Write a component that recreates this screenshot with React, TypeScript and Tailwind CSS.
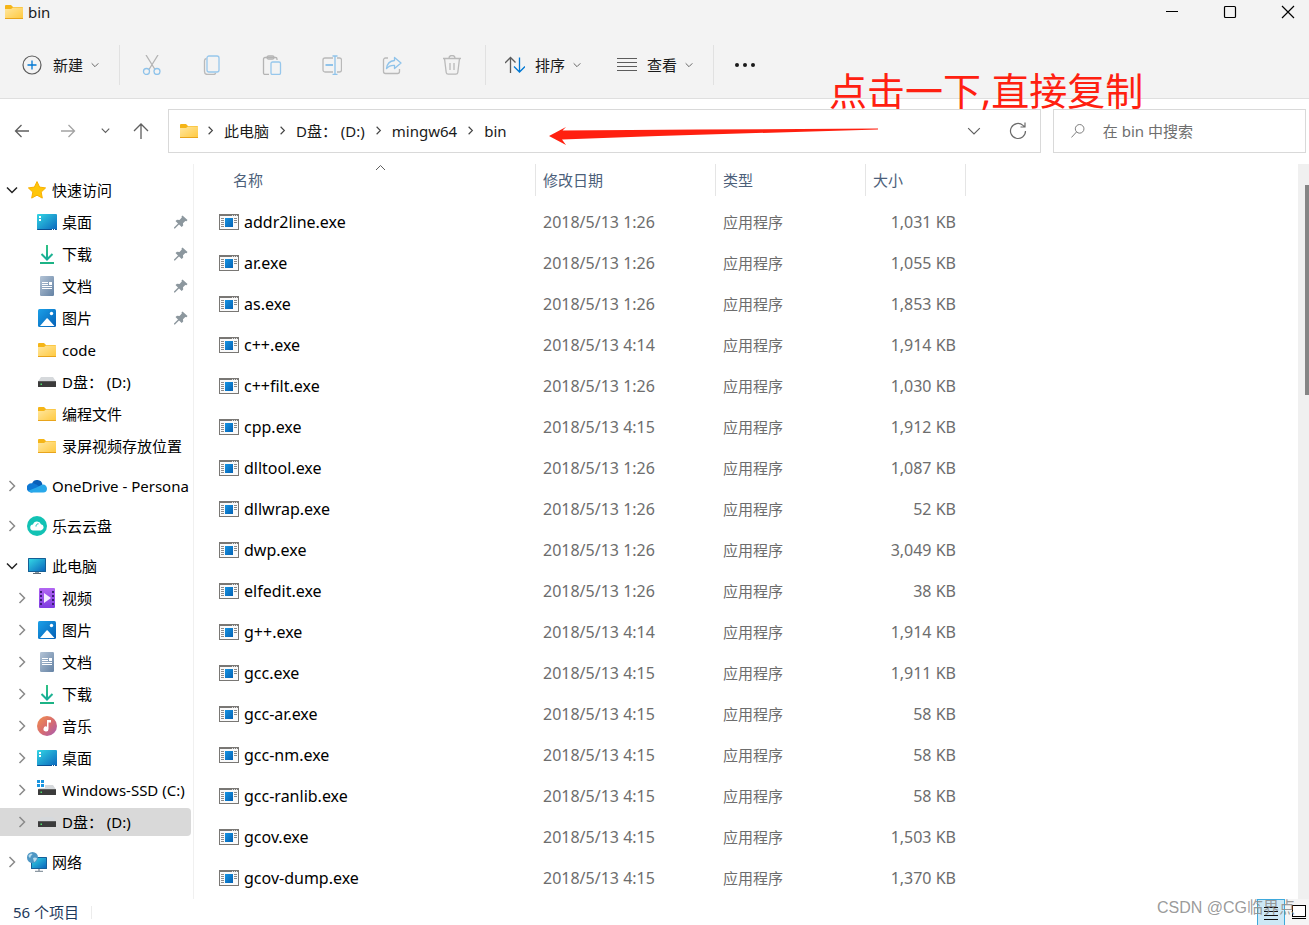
import type { ReactNode } from "react";

type IconProps = { className?: string };

const FolderIcon = ({ className = "" }: IconProps) => (
  <svg className={`w-5 h-5 shrink-0 ${className}`} viewBox="0 0 20 20">
    <defs>
      <linearGradient id="folder" x1="0" y1="0" x2="1" y2="1">
        <stop offset="0" stopColor="#ffe7a0" />
        <stop offset="1" stopColor="#ffc83d" />
      </linearGradient>
    </defs>
    <path d="M1 4a1 1 0 0 1 1-1h5l2 2h9a1 1 0 0 1 1 1v4H1z" fill="#f5b517" />
    <path d="M1 7h6l2-1.4h10V16a1 1 0 0 1-1 1H2a1 1 0 0 1-1-1z" fill="url(#folder)" />
    <path d="M1 16.5h18" stroke="#e8a41c" strokeWidth="1" />
  </svg>
);

const StarIcon = () => (
  <svg className="w-5 h-5 shrink-0" viewBox="0 0 20 20">
    <path
      d="M10 1.6l2.6 5.5 6 .8-4.4 4.2 1.1 6L10 15.2l-5.3 2.9 1.1-6L1.4 7.9l6-.8z"
      fill="#ffc60a"
      stroke="#f9b000"
      strokeWidth="1"
      strokeLinejoin="round"
    />
  </svg>
);

const DesktopIcon = () => (
  <svg className="w-5 h-5 shrink-0" viewBox="0 0 20 20">
    <defs>
      <linearGradient id="desktop" x1="0" y1="0" x2="1" y2="1">
        <stop offset="0" stopColor="#33d6e4" />
        <stop offset="1" stopColor="#0a66bd" />
      </linearGradient>
    </defs>
    <rect x="0" y="2" width="20" height="16" rx="1" fill="url(#desktop)" />
    <path d="M0 17h20v0a1 1 0 0 1-1 1H1a1 1 0 0 1-1-1z" fill="#0b4f93" />
    <path d="M2 4h2v2H2zM2 7h2v2H2z" fill="#fff" />
    <path d="M15 17.5h1M17 17.5h1" stroke="#fff" strokeWidth="1" />
  </svg>
);

const DownloadIcon = () => (
  <svg className="w-5 h-5 shrink-0" viewBox="0 0 20 20" fill="none" strokeWidth="2">
    <defs>
      <linearGradient id="download" gradientUnits="userSpaceOnUse" x1="0" y1="0" x2="0" y2="20">
        <stop offset="0" stopColor="#33c481" />
        <stop offset="1" stopColor="#0da5a0" />
      </linearGradient>
    </defs>
    <path d="M10 1v14M4.5 10l5.5 5.5L15.5 10" stroke="url(#download)" />
    <path d="M3 19h14" stroke="#1cb385" />
  </svg>
);

const DocumentIcon = () => (
  <svg className="w-5 h-5 shrink-0" viewBox="0 0 20 20">
    <defs>
      <linearGradient id="doc" x1="0" y1="0" x2="1" y2="1">
        <stop offset="0" stopColor="#b4c4d6" />
        <stop offset="1" stopColor="#6482a4" />
      </linearGradient>
    </defs>
    <rect x="3" y="0" width="14" height="20" rx="1.2" fill="url(#doc)" />
    <path d="M5 6.5h6M5 8.5h6M5 10.5h10M5 12.5h10" stroke="#fff" strokeWidth="1" />
    <rect x="12" y="6" width="3" height="3" fill="#fff" />
  </svg>
);

const PictureIcon = () => (
  <svg className="w-5 h-5 shrink-0" viewBox="0 0 20 20">
    <defs>
      <linearGradient id="pic" x1="0" y1="0" x2="1" y2="1">
        <stop offset="0" stopColor="#1ba0e8" />
        <stop offset="1" stopColor="#0560b6" />
      </linearGradient>
    </defs>
    <rect x="1" y="1" width="18" height="18" rx="1.5" fill="url(#pic)" />
    <path d="M3 18l6.5-7.5a.8.8 0 0 1 1.2 0L17.5 18z" fill="#fff" />
    <circle cx="14.5" cy="5.5" r="1.7" fill="#fff" />
  </svg>
);

const DriveIcon = ({ windows = false }: { windows?: boolean }) => (
  <svg className="w-5 h-5 shrink-0" viewBox="0 0 20 20">
    <path d="M4 5h12l3 4.5H1z" fill="#d6d9dc" />
    <rect x="1" y="9" width="18" height="6" rx=".6" fill="#3b3b3b" />
    <path d="M1 9.5h18" stroke="#5c5c5c" />
    <rect x="3.5" y="11.5" width="1.5" height="1.5" fill="#4de06c" />
    {windows && (
      <>
        <path d="M0 0h8v8H0z" fill="#fff" />
        <path d="M0 0h3v3H0zM4 0h3v3H4zM0 4h3v3H0zM4 4h3v3H4z" fill="#1a95e0" />
      </>
    )}
  </svg>
);

const OneDriveIcon = () => (
  <svg className="w-5 h-5 shrink-0" viewBox="0 0 20 20">
    <path d="M5 7.5a5.5 5.5 0 0 1 10.5 1L10 13z" fill="#0a5fb8" />
    <path d="M4.500 7.300C6.500 6.800 8 7.600 9.500 8.600L14 12l-9 4.500h-.8A4.300 4.300 0 0 1 4.500 7.300z" fill="#0f78d4" />
    <path d="M9.500 11.500l4.500-2.300c3-1.700 6 .6 6 3.600a3.700 3.700 0 0 1-3.700 3.700H4.500c-1.500 0-2.600-.8-3.200-1.700z" fill="#28a8ea" />
  </svg>
);

const CloudDiskIcon = () => (
  <svg className="w-5 h-5 shrink-0" viewBox="0 0 20 20">
    <circle cx="10" cy="10" r="10" fill="#12c2b4" />
    <path d="M6.500 14.500a3 3 0 0 1-.5-6 4.200 4.200 0 0 1 8-.3 3.200 3.200 0 0 1 0 6.300z" fill="#fff" />
    <path d="M9 10.500c0-1.800 1-2.700 2.500-2.700" fill="none" stroke="#12c2b4" strokeWidth="1" />
  </svg>
);

const ComputerIcon = () => (
  <svg className="w-5 h-5 shrink-0" viewBox="0 0 20 20">
    <rect x="1" y="2" width="18" height="14" rx=".5" fill="#145f95" />
    <rect x="2" y="3" width="16" height="12" fill="url(#desktop)" />
    <path d="M8 16h4v1.500H8z" fill="#8b98a3" />
    <path d="M6 17.500h8" stroke="#5e6a74" />
  </svg>
);

const VideoIcon = () => (
  <svg className="w-5 h-5 shrink-0" viewBox="0 0 20 20">
    <defs>
      <linearGradient id="video" x1="0" y1="0" x2="0" y2="1">
        <stop offset="0" stopColor="#b266f2" />
        <stop offset="1" stopColor="#7e3be0" />
      </linearGradient>
    </defs>
    <rect x="2" y="0" width="16" height="20" rx="1" fill="url(#video)" />
    <path d="M4 3v15M16 3v15" stroke="#3c1d75" strokeWidth="2" strokeDasharray="2 2" />
    <path d="M7 5l7 5-7 5z" fill="#f4ecff" />
  </svg>
);

const MusicIcon = () => (
  <svg className="w-5 h-5 shrink-0" viewBox="0 0 20 20">
    <defs>
      <linearGradient id="music" x1="0" y1="0" x2="1" y2="1">
        <stop offset="0" stopColor="#f2914f" />
        <stop offset=".5" stopColor="#d96d6c" />
        <stop offset="1" stopColor="#a55ab5" />
      </linearGradient>
    </defs>
    <circle cx="10" cy="10" r="10" fill="url(#music)" />
    <path d="M10 4h4v2.500h-2.500V13a2.500 2.500 0 1 1-1.500-2.300z" fill="#fff" />
  </svg>
);

const NetworkIcon = () => (
  <svg className="w-5 h-5 shrink-0" viewBox="0 0 20 20">
    <rect x="4" y="5" width="16" height="12" rx=".5" fill="#155f9a" />
    <rect x="5" y="6" width="14" height="10" fill="url(#desktop)" />
    <path d="M12 17v2M8 19.500h8" stroke="#8d99a3" strokeWidth="1.500" />
    <circle cx="5.500" cy="5.500" r="5.500" fill="#4e97c4" />
    <path d="M1.500 3.500c1-1.500 2.500-2 4-1.500-.5 1.500-2 1.500-2 3.500-1 .5-2-.5-2-2zM6 6c1.500-1 3-.5 4 0-.5 2-1.500 3.500-3 4z" fill="#b9dcee" />
  </svg>
);

const PinIcon = () => (
  <svg className="w-[14px] h-[14px] shrink-0" viewBox="0 0 14 14">
    <path d="M8.500.5l5 4.500-1 1.200-1.200-.2-2.300 2.200.2 2.300-1.500 1.500L5 9.500 1 13.500H0v-1L4 8.500 1.500 6 3 4.700l2.500.2L7.800 2.500 7.500 1.500z" fill="#8c979e" />
  </svg>
);

const ExeIcon = () => (
  <svg className="w-5 h-4 shrink-0" viewBox="0 0 20 16">
    <defs>
      <linearGradient id="exe" x1="0" y1="0" x2="1" y2="1">
        <stop offset="0" stopColor="#1593e2" />
        <stop offset="1" stopColor="#0562b4" />
      </linearGradient>
    </defs>
    <rect x=".5" y=".5" width="19" height="15" fill="#fafafa" stroke="#797774" />
    <path d="M0 1h20" stroke="#797774" strokeWidth="2" />
    <path d="M13 1.500h1M15 1.500h1M17 1.500h1" stroke="#ddd" />
    <rect x="6" y="4" width="8" height="9" fill="url(#exe)" />
    <path d="M2 4.500h3M2 6.500h3M2 8.500h3M2 10.500h3M2 12.500h3M15 4.500h3M15 6.500h3M15 8.500h3" stroke="#8a8a8a" />
  </svg>
);

const Chevron = ({ dir, className = "" }: { dir: "down" | "right"; className?: string }) => (
  <svg className={`shrink-0 ${className}`} viewBox="0 0 12 12" fill="none" stroke="currentColor">
    <path d={dir === "down" ? "M1 3.500l5 5 5-5" : "M3.500 1l5 5-5 5"} />
  </svg>
);

const tools: { label: string; icon: ReactNode }[] = [
  {
    label: "剪切",
    icon: (
      <>
        <path d="M4 0l9 14.500M16 0L7 14.500" stroke="#b4b4b4" />
        <circle cx="4.500" cy="16.500" r="3" stroke="#8fc3ea" />
        <circle cx="15" cy="16.500" r="3" stroke="#8fc3ea" />
      </>
    ),
  },
  {
    label: "复制",
    icon: (
      <>
        <path d="M4.500 3.500c-1.500.3-2 1-2 2v11a3 3 0 0 0 3 3h6c1 0 1.800-.5 2.200-1.500" stroke="#b9b9b9" />
        <rect x="5" y="1" width="12" height="16" rx="2" stroke="#97c7ec" />
      </>
    ),
  },
  {
    label: "粘贴",
    icon: (
      <>
        <path d="M7 19.500H3a1.500 1.500 0 0 1-1.500-1.500V4A1.500 1.500 0 0 1 3 2.500h10.500A1.500 1.500 0 0 1 15 4v1" stroke="#b4b4b4" />
        <rect x="5" y="1" width="7" height="3" rx="1.500" stroke="#b4b4b4" />
        <rect x="9" y="7" width="9.500" height="12.500" rx="1.500" stroke="#97c7ec" />
      </>
    ),
  },
  {
    label: "重命名",
    icon: (
      <>
        <path d="M11 17H3a2 2 0 0 1-2-2V5a2 2 0 0 1 2-2h8M15 3h2.500a2 2 0 0 1 2 2v10a2 2 0 0 1-2 2H15" stroke="#b9b9b9" />
        <path d="M13 1v18M10.500 1h5M10.500 19.500h5" stroke="#8fc3ea" />
        <path d="M3.500 10h7.500" stroke="#8fc3ea" strokeWidth="2" />
      </>
    ),
  },
  {
    label: "共享",
    icon: (
      <>
        <path d="M6 3H3.500a2 2 0 0 0-2 2v11.500a2 2 0 0 0 2 2h12a2 2 0 0 0 2-2V14" stroke="#b9b9b9" />
        <path d="M12.500 2.500l6.500 5.500-6.500 5.500v-3.200c-3.500-.2-6 .8-8 3.200.5-4.500 3.500-7.500 8-8z" stroke="#8fc3ea" strokeLinejoin="round" />
      </>
    ),
  },
  {
    label: "删除",
    icon: (
      <path
        d="M1 3.500h18M7 3a3 2.500 0 0 1 6 0M2.500 3.500l1.700 14a2 2 0 0 0 2 1.700h7.600a2 2 0 0 0 2-1.700l1.700-14M8 8v7M12 8v7"
        stroke="#b9b9b9"
      />
    ),
  },
];

type NavItem = {
  label: string;
  icon: ReactNode;
  expander?: "down" | "right";
  child?: boolean;
  pinned?: boolean;
  selected?: boolean;
};

const navGroups: NavItem[][] = [
  [
    { label: "快速访问", icon: <StarIcon />, expander: "down" },
    { label: "桌面", icon: <DesktopIcon />, child: true, pinned: true },
    { label: "下载", icon: <DownloadIcon />, child: true, pinned: true },
    { label: "文档", icon: <DocumentIcon />, child: true, pinned: true },
    { label: "图片", icon: <PictureIcon />, child: true, pinned: true },
    { label: "code", icon: <FolderIcon />, child: true },
    { label: "D盘： (D:)", icon: <DriveIcon />, child: true },
    { label: "编程文件", icon: <FolderIcon />, child: true },
    { label: "录屏视频存放位置", icon: <FolderIcon />, child: true },
  ],
  [{ label: "OneDrive - Persona", icon: <OneDriveIcon />, expander: "right" }],
  [{ label: "乐云云盘", icon: <CloudDiskIcon />, expander: "right" }],
  [
    { label: "此电脑", icon: <ComputerIcon />, expander: "down" },
    { label: "视频", icon: <VideoIcon />, expander: "right", child: true },
    { label: "图片", icon: <PictureIcon />, expander: "right", child: true },
    { label: "文档", icon: <DocumentIcon />, expander: "right", child: true },
    { label: "下载", icon: <DownloadIcon />, expander: "right", child: true },
    { label: "音乐", icon: <MusicIcon />, expander: "right", child: true },
    { label: "桌面", icon: <DesktopIcon />, expander: "right", child: true },
    { label: "Windows-SSD (C:)", icon: <DriveIcon windows />, expander: "right", child: true },
    { label: "D盘： (D:)", icon: <DriveIcon />, expander: "right", child: true, selected: true },
  ],
  [{ label: "网络", icon: <NetworkIcon />, expander: "right" }],
];

const files = [
  ["addr2line.exe", "2018/5/13 1:26", "1,031 KB"],
  ["ar.exe", "2018/5/13 1:26", "1,055 KB"],
  ["as.exe", "2018/5/13 1:26", "1,853 KB"],
  ["c++.exe", "2018/5/13 4:14", "1,914 KB"],
  ["c++filt.exe", "2018/5/13 1:26", "1,030 KB"],
  ["cpp.exe", "2018/5/13 4:15", "1,912 KB"],
  ["dlltool.exe", "2018/5/13 1:26", "1,087 KB"],
  ["dllwrap.exe", "2018/5/13 1:26", "52 KB"],
  ["dwp.exe", "2018/5/13 1:26", "3,049 KB"],
  ["elfedit.exe", "2018/5/13 1:26", "38 KB"],
  ["g++.exe", "2018/5/13 4:14", "1,914 KB"],
  ["gcc.exe", "2018/5/13 4:15", "1,911 KB"],
  ["gcc-ar.exe", "2018/5/13 4:15", "58 KB"],
  ["gcc-nm.exe", "2018/5/13 4:15", "58 KB"],
  ["gcc-ranlib.exe", "2018/5/13 4:15", "58 KB"],
  ["gcov.exe", "2018/5/13 4:15", "1,503 KB"],
  ["gcov-dump.exe", "2018/5/13 4:15", "1,370 KB"],
];

const Separator = ({ className = "" }: IconProps) => (
  <div className={`w-px h-10 bg-[#e1e1e1] shrink-0 ${className}`} />
);

const TitleBar = () => (
  <div className="flex items-center justify-between h-6 pl-1 pr-[14px]">
    <div className="flex items-center gap-1">
      <FolderIcon />
      <span>bin</span>
    </div>
    <div className="flex items-center gap-[44px]">
      <button aria-label="最小化" className="w-[14px] h-[14px]">
        <svg viewBox="0 0 14 14" stroke="#000"><path d="M1 6.500h12" /></svg>
      </button>
      <button aria-label="最大化" className="w-[14px] h-[14px]">
        <svg viewBox="0 0 14 14" fill="none" stroke="#000"><rect x="1.500" y="1.500" width="11" height="11" rx="1" strokeWidth="1.200" /></svg>
      </button>
      <button aria-label="关闭" className="w-[14px] h-[14px]">
        <svg viewBox="0 0 14 14" stroke="#000" strokeWidth="1.200"><path d="M1 1l12 12M13 1L1 13" /></svg>
      </button>
    </div>
  </div>
);

const Toolbar = () => (
  <div className="flex items-center grow pl-[22px] pt-2">
    <button className="flex items-center gap-2">
      <svg className="w-5 h-5" viewBox="0 0 20 20" fill="none">
        <circle cx="10" cy="10" r="9" stroke="#5c5c5c" strokeWidth="1.200" />
        <path d="M10 5.500v9M5.500 10h9" stroke="#0078d4" strokeWidth="1.300" />
      </svg>
      <span className="pl-[3px]">新建</span>
      <Chevron dir="down" className="w-2 h-2 stroke-[1.5] text-[#666]" />
    </button>
    <Separator className="ml-5" />
    <div className="flex ml-[2px] mr-[3px]">
      {tools.map((t) => (
        <button key={t.label} aria-label={t.label} disabled className="flex justify-center w-[60px]">
          <svg className="w-5 h-5" viewBox="0 0 20 20" fill="none" strokeWidth="1.300">{t.icon}</svg>
        </button>
      ))}
    </div>
    <Separator />
    <button className="flex items-center gap-2 ml-[19px]">
      <svg className="w-5 h-5" viewBox="0 0 20 20" fill="none" strokeWidth="1.300">
        <path d="M5.500 18V2.500M0 8l5.500-5.500 5 5" stroke="#5c5c5c" />
        <path d="M14.500 2.500V17M9 11.500l5.500 5.500 5.500-5.500" stroke="#0078d4" />
      </svg>
      <span className="pl-[2px]">排序</span>
      <Chevron dir="down" className="w-2 h-2 stroke-[1.5] text-[#666]" />
    </button>
    <button className="flex items-center gap-2 ml-9">
      <svg className="w-5 h-5" viewBox="0 0 20 20" stroke="#5c5c5c">
        <path d="M0 3.500h20M0 7.500h20M0 11.500h20M0 15.500h20" />
      </svg>
      <span className="pl-[2px]">查看</span>
      <Chevron dir="down" className="w-2 h-2 stroke-[1.5] text-[#666]" />
    </button>
    <Separator className="ml-5" />
    <button aria-label="更多" className="ml-5">
      <svg className="w-[22px] h-5" viewBox="0 0 22 20" fill="#1a1a1a">
        <circle cx="3" cy="10" r="2" />
        <circle cx="11" cy="10" r="2" />
        <circle cx="19" cy="10" r="2" />
      </svg>
    </button>
  </div>
);

const crumbs = ["此电脑", "D盘： (D:)", "mingw64", "bin"];

const AddressRow = () => (
  <div className="relative flex items-center h-[65px] pr-[3px] pb-[2px]">
    <div className="flex items-center w-[168px] pl-[14px] text-[#5f5f5f] shrink-0">
      <button aria-label="后退" className="w-4 h-4">
        <svg viewBox="0 0 16 16" fill="none" stroke="currentColor" strokeWidth="1.300"><path d="M15 8H1.500M7.500 2l-6 6 6 6" /></svg>
      </button>
      <button aria-label="前进" className="w-4 h-4 ml-[30px] text-[#a3a3a3]">
        <svg viewBox="0 0 16 16" fill="none" stroke="currentColor" strokeWidth="1.300"><path d="M1 8h13.500M8.500 2l6 6-6 6" /></svg>
      </button>
      <button aria-label="最近浏览的位置" className="ml-[25px]">
        <Chevron dir="down" className="w-[9px] h-[9px] stroke-[1.5]" />
      </button>
      <button aria-label="向上" className="w-4 h-4 ml-[23px]">
        <svg viewBox="0 0 16 16" fill="none" stroke="currentColor" strokeWidth="1.300"><path d="M8 16V1M1 8l7-7 7 7" /></svg>
      </button>
    </div>
    <nav aria-label="路径" className="flex items-center grow h-11 pl-[10px] pr-[13px] border border-[#d9d9d9]">
      <FolderIcon className="-mr-[2px]" />
      {crumbs.map((c) => (
        <div key={c} className="flex items-center">
          <Chevron dir="right" className="w-[9px] h-[9px] mx-[9px] text-[#444] stroke-[1.5]" />
          <a href="#" className="whitespace-pre">{c}</a>
        </div>
      ))}
      <button aria-label="以前的位置" className="ml-auto text-[#5f5f5f]">
        <Chevron dir="down" className="w-[14px] h-[14px]" />
      </button>
      <button aria-label="刷新" className="ml-7 w-[18px] h-[18px]">
        <svg viewBox="0 0 18 18" fill="none" stroke="#6b6b6b" strokeWidth="1.200"><path d="M16.500 9a7.500 7.500 0 1 1-2.500-5.600L16 5M16 .5V5h-4.500" /></svg>
      </button>
    </nav>
    <label className="flex items-center w-[253px] h-11 ml-3 pl-[17px] border border-[#d9d9d9] shrink-0">
      <svg className="w-4 h-4" viewBox="0 0 16 16" fill="none" stroke="#6b6b6b"><circle cx="10" cy="5.500" r="5" /><path d="M6.500 9L.5 15.500" /></svg>
      <input
        type="search"
        aria-label="搜索"
        placeholder="在 bin 中搜索"
        className="w-full ml-[18px] outline-none placeholder:text-[#6e6e6e]"
      />
    </label>

    {/* annotation */}
    <div className="absolute left-[829px] -top-[35px] text-[38px] leading-[52px] text-[#ff2010] whitespace-nowrap">
      点击一下,直接复制
    </div>
    <svg className="absolute left-[548px] top-[28px] w-[332px] h-5" viewBox="0 0 332 20">
      <path d="M1 9L18 0l-3.500 3.500L150 2.500 330 1.500v1L110 9 14 12.500l4 5.500z" fill="#ff2010" />
    </svg>
  </div>
);

const NavRow = ({ item }: { item: NavItem }) => (
  <li className="flex items-center h-8">
    <div
      className={`flex items-center w-[191px] h-7 pr-[3px] rounded-r-sm ${item.child ? "pl-4" : "pl-[6px]"} ${
        item.selected ? "bg-[#d9d9d9]" : ""
      }`}
    >
      {item.expander ? (
        <button aria-label={item.label} className="mr-[9px]">
          <Chevron
            dir={item.expander}
            className={item.expander === "down" ? "w-3 h-3 stroke-[1.5] text-[#222]" : "w-3 h-3 stroke-[1.5] text-[#8a8a8a]"}
          />
        </button>
      ) : (
        <span className="w-3 mr-[9px]" />
      )}
      <a href="#" className="flex items-center gap-[5px] grow whitespace-pre">
        {item.icon}
        <span>{item.label}</span>
      </a>
      {item.pinned && <PinIcon />}
    </div>
  </li>
);

const Sidebar = () => (
  <aside className="w-[194px] shrink-0 pt-[10px] border-r border-[#f0f0f0] text-black">
    <div className="flex flex-col gap-2 w-[191px]">
      {navGroups.map((group) => (
        <ul key={group[0].label}>
          {group.map((item) => (
            <NavRow key={item.label} item={item} />
          ))}
        </ul>
      ))}
    </div>
  </aside>
);

const FileTable = () => (
  <table className="w-[772px] table-fixed text-left self-start">
    <colgroup>
      <col className="w-[342px]" />
      <col className="w-[180px]" />
      <col className="w-[150px]" />
      <col className="w-[100px]" />
    </colgroup>
    <thead className="text-[#4c607a]">
      <tr className="h-[37px] align-top">
        <th className="p-0 font-normal">
          <div className="relative flex items-center h-8 pl-[39px] border-r border-[#e5e5e5]">
            名称
            <svg className="absolute left-[181px] top-0 w-[11px] h-[7px]" viewBox="0 0 11 7" fill="none" stroke="#5f5f5f">
              <path d="M1 6l4.500-4.500L10 6" />
            </svg>
          </div>
        </th>
        {["修改日期", "类型", "大小"].map((h) => (
          <th key={h} className="p-0 font-normal">
            <div className="flex items-center h-8 pl-[7px] border-r border-[#e5e5e5]">{h}</div>
          </th>
        ))}
      </tr>
    </thead>
    <tbody className="text-[#6d6d6d]">
      {files.map(([name, date, size]) => (
        <tr key={name} className="h-[41px]">
          <td className="p-0 pl-[25px] text-base leading-5 text-black">
            <div className="flex items-center gap-[5px]">
              <ExeIcon />
              {name}
            </div>
          </td>
          <td className="p-0 pl-[7px] text-base leading-5">{date}</td>
          <td className="p-0 pl-[7px]">应用程序</td>
          <td className="p-0 pr-[10px] text-right text-base leading-5">{size}</td>
        </tr>
      ))}
    </tbody>
  </table>
);

const StatusBar = () => (
  <footer className="relative flex items-center h-[26px] pl-[13px] text-[#1e395b]">
    <span>56 个项目</span>
    <div className="w-px h-[13px] ml-3 bg-[#ececec]" />
    <button aria-label="详细信息" className="flex items-center justify-center w-7 h-[26px] ml-auto bg-[#cde8f5] border border-b-0 border-[#3fa9dc]">
      <svg className="w-4 h-4" viewBox="0 0 16 16" stroke="#111"><path d="M1 2.500h14M1 6.500h14M1 10.500h14M1 14.500h14" /></svg>
    </button>
    <button aria-label="大缩略图" className="flex items-center justify-center w-6 h-[26px] pl-1 bg-[#f5f5f5]">
      <svg className="w-[14px] h-4" viewBox="0 0 14 16" fill="#fff" stroke="#000"><rect x=".5" y="1.500" width="13" height="11" /><path d="M0 14.500h14" /></svg>
    </button>
    <span className="absolute right-[14px] -top-[3px] text-base leading-6 font-['Liberation_Sans','Noto_Sans_CJK_SC',sans-serif] text-[#8e8e8e]/90 whitespace-nowrap">
      CSDN @CG临界点
    </span>
  </footer>
);

export default function App() {
  return (
    <div className="flex flex-col min-h-screen bg-white text-[15px] leading-5 text-[#1a1a1a] font-['Noto_Sans','Noto_Sans_CJK_SC',sans-serif]">
      <header className="flex flex-col h-[99px] bg-[#f3f3f3] border-b border-[#dfdfdf]">
        <TitleBar />
        <Toolbar />
      </header>
      <AddressRow />
      <main className="flex grow">
        <Sidebar />
        <FileTable />
        <div className="w-[11px] ml-auto pt-[21px] bg-[#f0f0f0] shrink-0">
          <div className="w-1 h-[210px] ml-auto bg-[#858585]" />
        </div>
      </main>
      <StatusBar />
    </div>
  );
}
